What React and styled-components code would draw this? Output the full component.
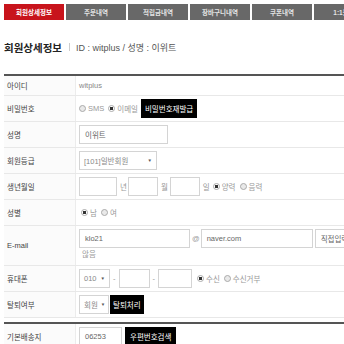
import React from "react";
import styled, { createGlobalStyle } from "styled-components";

const Global = createGlobalStyle`
  html, body { margin: 0; padding: 0; background: #fff; }
  body { font-family: "Liberation Sans", "Noto Sans CJK KR", sans-serif; overflow: hidden; width: 344px; height: 344px; }
  * { box-sizing: border-box; }
`;

const Page = styled.div`
  width: 344px;
  height: 344px;
  overflow: hidden;
  padding: 4px 0 0 4px;
`;

const Tabs = styled.div`
  display: flex;
  gap: 2px;
  width: 400px;
`;

const Tab = styled.div`
  flex: 0 0 60px;
  height: 16px;
  display: flex;
  align-items: center;
  justify-content: center;
  font-size: 6.5px;
  font-weight: bold;
  white-space: nowrap;
  color: ${(p) => (p.$active ? "#fff" : "#e4e4e4")};
  background: ${(p) => (p.$active ? "#c8141c" : "#686868")};
  border-top-right-radius: ${(p) => (p.$last ? "6px" : "0")};
`;

const TitleBar = styled.div`
  display: flex;
  align-items: center;
  height: 14px;
  margin: 20px 0 20px;
`;

const Title = styled.h2`
  margin: 0;
  font-size: 10.5px;
  font-weight: bold;
  color: #222;
`;

const Sep = styled.span`
  width: 1px;
  height: 8px;
  background: #ccc;
  margin: 0 6px 0 7px;
`;

const Sub = styled.span`
  font-size: 9px;
  color: #555;
`;

const Table = styled.div`
  width: 400px;
  border-top: 2px solid #555;
  margin-bottom: ${(p) => p.$mb || 0}px;
`;

const Row = styled.div`
  display: grid;
  grid-template-columns: 72px 1fr;
  border-bottom: 1px solid #e8e8e8;
`;

const Label = styled.div`
  background: #fbfbfb;
  border-right: 1px solid #ececec;
  font-size: 7.5px;
  color: #444;
  padding-left: 3px;
  display: flex;
  align-items: center;
`;

const Cell = styled.div`
  padding: 3px;
  min-height: ${(p) => (p.$compact ? 19 : 25)}px;
  display: flex;
  flex-direction: ${(p) => (p.$column ? "column" : "row")};
  align-items: ${(p) => (p.$column ? "flex-start" : "center")};
  font-size: 7.5px;
  color: #777;
`;

const Line = styled.div`
  display: flex;
  align-items: center;
`;

const Input = styled.div`
  width: ${(p) => p.$w}px;
  height: 19px;
  border: 1px solid #d4d4d4;
  background: #fff;
  font-size: 7.5px;
  color: #666;
  display: flex;
  align-items: center;
  padding-left: 5px;
  flex: none;
  white-space: nowrap;
  overflow: hidden;
`;

const Select = styled(Input)`
  justify-content: space-between;
  padding-left: 4px;
  padding-right: 4px;
  color: #888;
  &::after {
    content: "▼";
    font-size: 4.5px;
    color: #555;
    margin-left: 3px;
  }
`;

const Txt = styled.span`
  font-size: 7.5px;
  color: ${(p) => p.$c || "#999"};
  margin: 0 ${(p) => p.$mr ?? 4}px 0 ${(p) => p.$ml ?? 4}px;
  flex: none;
  white-space: nowrap;
`;

const Radio = styled.span`
  width: 7px;
  height: 7px;
  border-radius: 50%;
  border: 1px solid #aaa;
  background: ${(p) => (p.$on ? "radial-gradient(circle, #333 0 1.6px, #fff 2px)" : "#e9e9e9")};
  flex: none;
  margin: 0 2px 0 ${(p) => p.$ml ?? 2}px;
`;

const Btn = styled.span`
  height: 19px;
  padding: 0 ${(p) => p.$px ?? 4}px;
  background: #000;
  color: #fff;
  font-size: 7.5px;
  display: flex;
  align-items: center;
  flex: none;
  white-space: nowrap;
  margin-left: ${(p) => p.$ml ?? 2}px;
`;

const Value = styled.span`
  color: #888;
  font-size: 7.5px;
`;

const Note = styled.span`
  font-size: 7.5px;
  color: #999;
  line-height: 14px;
  margin-left: 3px;
`;

const tabs = ["회원상세정보", "주문내역", "적립금내역", "장바구니내역", "쿠폰내역", "1:1문의"];

export default function App() {
  return (
    <>
      <Global />
      <Page>
        <Tabs>
          {tabs.map((t, i) => (
            <Tab key={t} $active={i === 0} $last={i === tabs.length - 1}>{t}</Tab>
          ))}
        </Tabs>
        <TitleBar>
          <Title>회원상세정보</Title>
          <Sep />
          <Sub>ID : witplus / 성명 : 이위트</Sub>
        </TitleBar>
        <Table $mb={4}>
          <Row>
            <Label>아이디</Label>
            <Cell $compact><Value>witplus</Value></Cell>
          </Row>
          <Row>
            <Label>비밀번호</Label>
            <Cell>
              <Radio $ml={0} /><Txt $ml={0} $mr={2}>SMS</Txt>
              <Radio $on /><Txt $ml={0} $mr={1}>이메일</Txt>
              <Btn>비밀번호재발급</Btn>
            </Cell>
          </Row>
          <Row>
            <Label>성명</Label>
            <Cell><Input $w={89}>이위트</Input></Cell>
          </Row>
          <Row>
            <Label>회원등급</Label>
            <Cell><Select $w={78}>[101]일반회원</Select></Cell>
          </Row>
          <Row>
            <Label>생년월일</Label>
            <Cell>
              <Input $w={38} /><Txt $ml={3} $mr={1}>년</Txt>
              <Input $w={30} /><Txt $ml={3} $mr={2}>월</Txt>
              <Input $w={30} /><Txt $ml={3} $mr={1}>일</Txt>
              <Radio $on /><Txt $ml={0} $mr={2}>양력</Txt>
              <Radio /><Txt $ml={0}>음력</Txt>
            </Cell>
          </Row>
          <Row>
            <Label>성별</Label>
            <Cell>
              <Radio $on /><Txt $ml={0} $mr={2}>남</Txt>
              <Radio /><Txt $ml={0}>여</Txt>
            </Cell>
          </Row>
          <Row>
            <Label>E-mail</Label>
            <Cell $column>
              <Line>
                <Input $w={111}>klo21</Input>
                <Txt $ml={2} $mr={1}>@</Txt>
                <Input $w={112}>naver.com</Input>
                <Txt $ml={1} $mr={1} />
                <Input $w={50}>직접입력</Input>
              </Line>
              <Note>않음</Note>
            </Cell>
          </Row>
          <Row>
            <Label>휴대폰</Label>
            <Cell>
              <Select $w={31}>010</Select><Txt $ml={3} $mr={3}>-</Txt>
              <Input $w={31} /><Txt $ml={3} $mr={3}>-</Txt>
              <Input $w={34} />
              <Radio $on $ml={5} /><Txt $ml={0} $mr={2}>수신</Txt>
              <Radio /><Txt $ml={0}>수신거부</Txt>
            </Cell>
          </Row>
          <Row>
            <Label>탈퇴여부</Label>
            <Cell>
              <Select $w={30}>회원</Select>
              <Btn $ml={1} $px={3}>탈퇴처리</Btn>
            </Cell>
          </Row>
        </Table>
        <Table>
          <Row>
            <Label>기본배송지</Label>
            <Cell>
              <Input $w={43}>06253</Input>
              <Btn $ml={3} $px={5}>우편번호검색</Btn>
            </Cell>
          </Row>
        </Table>
      </Page>
    </>
  );
}
